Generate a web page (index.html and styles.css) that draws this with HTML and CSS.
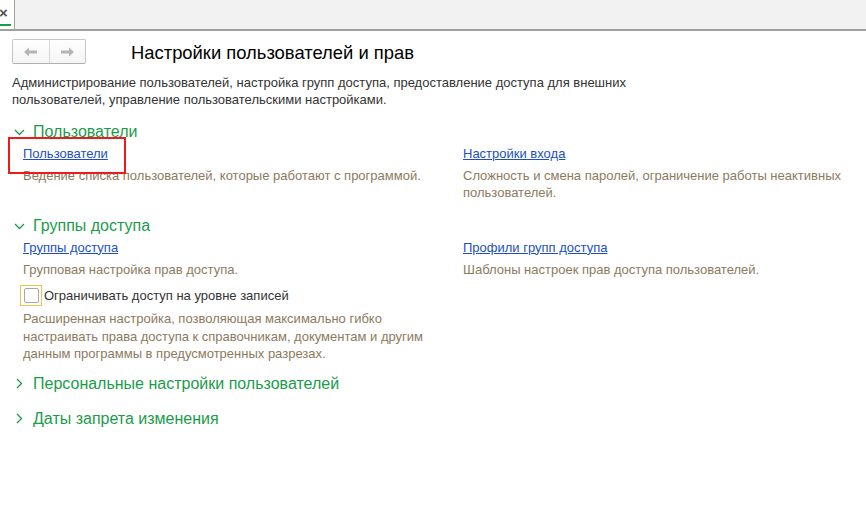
FILE: index.html
```html
<!DOCTYPE html>
<html lang="ru">
<head>
<meta charset="utf-8">
<link rel="stylesheet" href="styles.css">
</head>
<body>
<div class="topbar">
  <div class="tab"><span class="tab-x">×</span></div>
</div>
<div class="page">
  <div class="header">
    <div class="nav">
      <button class="nav-btn"><svg width="16" height="10" viewBox="0 0 16 10"><path d="M1 5 L6 0.5 L6 3.5 L14 3.5 L14 6.5 L6 6.5 L6 9.5 Z" fill="#b4b4b4"/></svg></button>
      <button class="nav-btn"><svg width="16" height="10" viewBox="0 0 16 10"><path d="M15 5 L10 0.5 L10 3.5 L2 3.5 L2 6.5 L10 6.5 L10 9.5 Z" fill="#b4b4b4"/></svg></button>
    </div>
    <h1 class="title">Настройки пользователей и прав</h1>
  </div>
  <p class="intro">Администрирование пользователей, настройка групп доступа, предоставление доступа для внешних<br>пользователей, управление пользовательскими настройками.</p>

  <div class="group">
    <div class="group-head"><svg class="chev" width="11" height="11" viewBox="0 0 11 11"><path d="M1 3 L5.5 7.5 L10 3" fill="none" stroke="#1a9c4a" stroke-width="1.3"/></svg><span>Пользователи</span></div>
    <div class="cols">
      <div class="col">
        <div class="link-wrap focused"><a class="link" href="#">Пользователи</a></div>
        <p class="note">Ведение списка пользователей, которые работают с программой.</p>
      </div>
      <div class="col">
        <div class="link-wrap"><a class="link" href="#">Настройки входа</a></div>
        <p class="note">Сложность и смена паролей, ограничение работы неактивных<br>пользователей.</p>
      </div>
    </div>
  </div>

  <div class="group">
    <div class="group-head"><svg class="chev" width="11" height="11" viewBox="0 0 11 11"><path d="M1 3 L5.5 7.5 L10 3" fill="none" stroke="#1a9c4a" stroke-width="1.3"/></svg><span>Группы доступа</span></div>
    <div class="cols">
      <div class="col">
        <div class="link-wrap"><a class="link" href="#">Группы доступа</a></div>
        <p class="note">Групповая настройка прав доступа.</p>
        <label class="check"><span class="box"><span class="box-in"></span></span><span>Ограничивать доступ на уровне записей</span></label>
        <p class="note note-multi">Расширенная настройка, позволяющая максимально гибко<br>настраивать права доступа к справочникам, документам и другим<br>данным программы в предусмотренных разрезах.</p>
      </div>
      <div class="col">
        <div class="link-wrap"><a class="link" href="#">Профили групп доступа</a></div>
        <p class="note">Шаблоны настроек прав доступа пользователей.</p>
      </div>
    </div>
  </div>

  <div class="group collapsed">
    <div class="group-head"><svg class="chev" width="11" height="11" viewBox="0 0 11 11"><path d="M3 1 L7.5 5.5 L3 10" fill="none" stroke="#1a9c4a" stroke-width="1.3"/></svg><span>Персональные настройки пользователей</span></div>
  </div>
  <div class="group collapsed">
    <div class="group-head"><svg class="chev" width="11" height="11" viewBox="0 0 11 11"><path d="M3 1 L7.5 5.5 L3 10" fill="none" stroke="#1a9c4a" stroke-width="1.3"/></svg><span>Даты запрета изменения</span></div>
  </div>
</div>
</body>
</html>
```
FILE: styles.css
```css
* { box-sizing: border-box; }
html, body { margin: 0; padding: 0; background: #fff; }
body { font-family: "Liberation Sans", Arial, sans-serif; font-size: 13px; color: #333; width: 866px; height: 512px; overflow: hidden; }

.topbar { height: 31px; background: #f2f2f2; border-bottom: 2px solid #a0a0a0; display: flex; }
.tab { width: 15px; height: 29px; background: #fff; border-right: 1px solid #a0a0a0; position: relative; overflow: hidden; }
.tab-x { position: absolute; left: -1px; top: 5px; font-size: 15px; font-weight: bold; color: #555; line-height: 16px; }
.tab::after { content: ""; position: absolute; left: 0; bottom: 3px; width: 11px; height: 2px; background: #1a9c4a; }

.page { padding: 8px 12px 0 12px; }
.header { display: flex; align-items: center; height: 25px; }
.nav { display: flex; width: 74px; height: 25px; border: 1px solid #c6c6c6; border-bottom-color: #b0b0b0; border-radius: 2px; background: linear-gradient(#fff, #f4f4f4); }
.nav-btn { flex: 1; border: none; background: transparent; padding: 0; display: flex; align-items: center; justify-content: center; }
.nav-btn + .nav-btn { border-left: 1px solid #d8d8d8; }
.title { margin: 0 0 0 45px; font-size: 18.4px; font-weight: normal; color: #000; line-height: 22px; position: relative; top: 1px; }

.intro { margin: 10px 0 0 0; line-height: 17px; color: #333; }

.group-head { display: flex; align-items: center; height: 20px; color: #1a9c4a; font-size: 16px; margin-left: 2px; }
.group-head .chev { margin-right: 8px; }
.intro + .group { margin-top: 14px; }
.cols { display: flex; padding-left: 11px; }
.col { width: 440px; }
.col + .col { width: auto; }
.link-wrap { height: 22px; display: flex; align-items: center; }
.link { color: #1c4fbf; text-decoration: underline; }
.focused { position: relative; }
.focused::before { content: ""; position: absolute; left: -15px; top: -5px; width: 114px; height: 33px; border: 2px solid #ec1c1c; }
.note { margin: 3px 0 0 0; color: #8c7a5e; line-height: 17px; }
.group + .group { margin-top: 15px; }
.group + .group.collapsed { margin-top: 11px; }
.group.collapsed + .group.collapsed { margin-top: 15px; }
.check { display: flex; align-items: center; margin-top: 7px; margin-left: -3px; height: 21px; color: #333; }
.box { width: 22px; height: 21px; border: 1px solid #f0c34a; display: flex; align-items: center; justify-content: center; margin-right: 2px; }
.box-in { width: 15px; height: 15px; border: 1px solid #a8a8a8; border-radius: 2px; background: #fff; }
.note-multi { margin-top: 4px; line-height: 17.5px; }
```
